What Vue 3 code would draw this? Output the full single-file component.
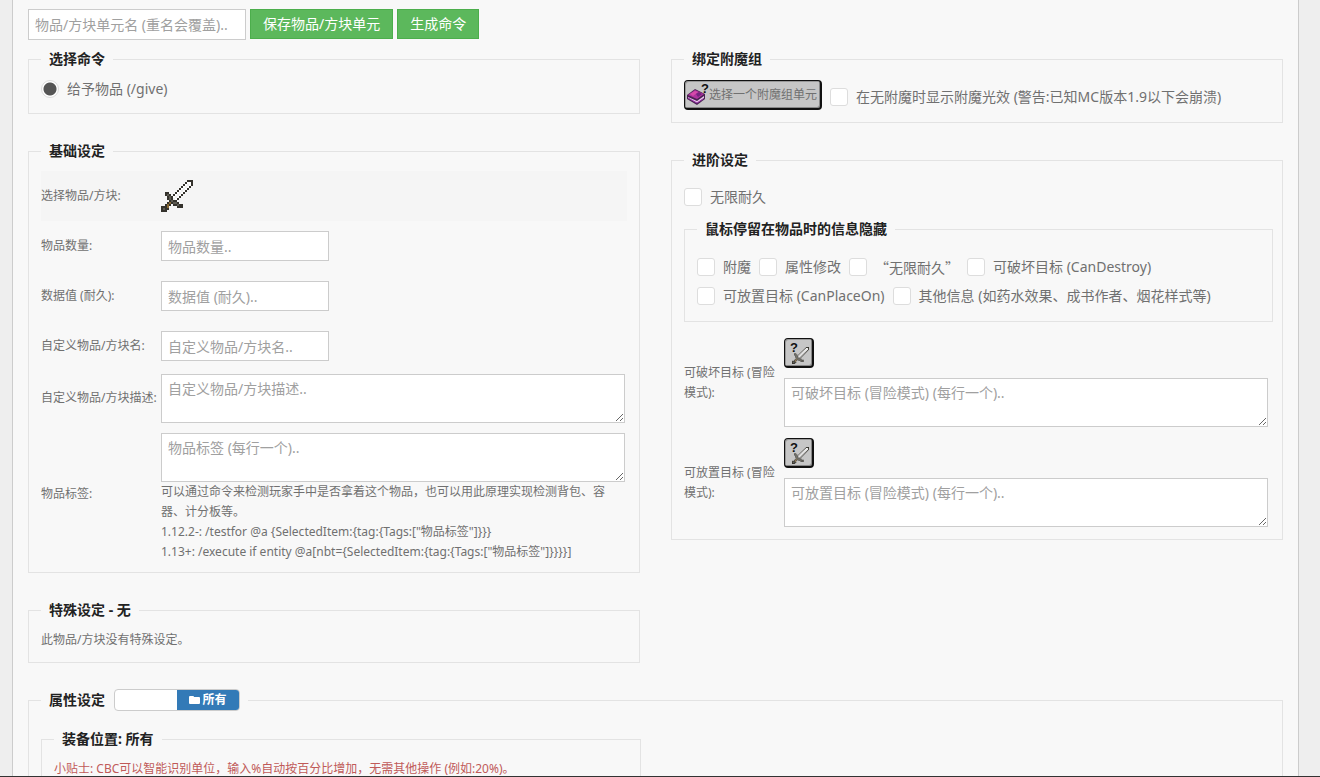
<script setup>
import { ref } from 'vue'

const swordMap = [
  '.............###',
  '............#ww#',
  '...........#wgw#',
  '..........#wgw#.',
  '.........#wgw#..',
  '........#wgw#...',
  '..##...#wgw#....',
  '..#s#.#wgw#.....',
  '...#s#wgw#......',
  '...#s#gw#.......',
  '....#s##........',
  '...#b#ss#.......',
  '..#b#.##s##.....',
  '###b....###.....',
  '#s##............',
  '###.............'
]
const palette = { '#': '#34322c', w: '#ffffff', g: '#ededed', s: '#5d5b52', b: '#8a6a35' }
const swordPixels = swordMap.flatMap((row, y) =>
  [...row].map((c, x) => ({ x, y, fill: palette[c] })).filter((p) => p.fill)
)

const unitName = ref('')
const command = ref('give')
const glint = ref(false)
const unbreakable = ref(false)
const hidden = ref([])

const inputs = [
  { id: 'count', label: '物品数量:', hint: '物品数量..' },
  { id: 'damage', label: '数据值 (耐久):', hint: '数据值 (耐久)..' },
  { id: 'name', label: '自定义物品/方块名:', hint: '自定义物品/方块名..' }
]
const flags = [
  { id: 'ench', text: '附魔' },
  { id: 'attr', text: '属性修改' },
  { id: 'unbr', text: '“无限耐久”', cjk: true },
  { id: 'destroy', text: '可破坏目标 (CanDestroy)' },
  { id: 'place', text: '可放置目标 (CanPlaceOn)' },
  { id: 'other', text: '其他信息 (如药水效果、成书作者、烟花样式等)' }
]
const targets = [
  { id: 'can-destroy', label: '可破坏目标 (冒险模式):', hint: '可破坏目标 (冒险模式) (每行一个)..' },
  { id: 'can-place', label: '可放置目标 (冒险模式):', hint: '可放置目标 (冒险模式) (每行一个)..' }
]
</script>

<template>
  <div class="page">
    <main class="panel">
      <form class="toolbar" @submit.prevent>
        <input v-model="unitName" class="field unit" type="text" aria-label="物品/方块单元名" placeholder="物品/方块单元名 (重名会覆盖).." />
        <button type="button" class="btn save">保存物品/方块单元</button>
        <button type="button" class="btn">生成命令</button>
      </form>

      <div class="columns">
        <div class="column">
          <fieldset class="command">
            <legend>选择命令</legend>
            <label class="check"><input v-model="command" type="radio" name="command" value="give" /><span>给予物品 (/give)</span></label>
          </fieldset>

          <fieldset class="basic">
            <legend>基础设定</legend>
            <div class="row striped">
              <span class="label">选择物品/方块:</span>
              <button type="button" class="item" aria-label="选择物品/方块">
                <svg width="32" height="32" viewBox="0 0 16 16" shape-rendering="crispEdges">
                  <rect v-for="(p, i) in swordPixels" :key="i" :x="p.x" :y="p.y" width="1" height="1" :fill="p.fill" />
                </svg>
              </button>
            </div>
            <div v-for="f in inputs" :key="f.id" class="row">
              <label class="label" :for="f.id">{{ f.label }}</label>
              <input :id="f.id" class="field short" type="text" :placeholder="f.hint" />
            </div>
            <div class="row tall">
              <label class="label" for="lore">自定义物品/方块描述:</label>
              <textarea id="lore" class="field area" placeholder="自定义物品/方块描述.."></textarea>
            </div>
            <div class="row tags">
              <label class="label" for="tags">物品标签:</label>
              <div class="grow">
                <textarea id="tags" class="field area" placeholder="物品标签 (每行一个).."></textarea>
                <p class="help">
                  可以通过命令来检测玩家手中是否拿着这个物品，也可以用此原理实现检测背包、容器、计分板等。<br />
                  1.12.2-: /testfor @a {SelectedItem:{tag:{Tags:["物品标签"]}}}<br />
                  1.13+: /execute if entity @a[nbt={SelectedItem:{tag:{Tags:["物品标签"]}}}}]
                </p>
              </div>
            </div>
          </fieldset>

          <fieldset>
            <legend>特殊设定 - 无</legend>
            <p class="note">此物品/方块没有特殊设定。</p>
          </fieldset>
        </div>

        <div class="column">
          <fieldset class="enchant">
            <legend>绑定附魔组</legend>
            <div class="bind">
              <button type="button" class="stone wide">
                <svg class="book" width="24" height="27" viewBox="0 0 24 27">
                  <path d="M2 14 10 8 20 13v5l-8 6-10-6z" fill="#4a2253" />
                  <path d="m3 14 7-5 9 4-7 5z" fill="#b0339f" />
                  <path d="m5 13 5-3 3 1-5 4z" fill="#d64aa9" />
                  <path d="m11 13 3-2 3 2-4 3z" fill="#74247f" />
                  <path d="m3 16 9 4 7-5v2l-7 5-9-5z" fill="#e8c5e9" />
                  <path d="m3 17 9 5 6-4" fill="none" stroke="#9b35aa" />
                  <text x="16" y="12" class="mark">?</text>
                </svg>
                <span>选择一个附魔组单元</span>
              </button>
              <label class="check"><input v-model="glint" type="checkbox" /><span>在无附魔时显示附魔光效 (警告:已知MC版本1.9以下会崩溃)</span></label>
            </div>
          </fieldset>

          <fieldset>
            <legend>进阶设定</legend>
            <label class="check first"><input v-model="unbreakable" type="checkbox" /><span>无限耐久</span></label>
            <fieldset class="flags">
              <legend>鼠标停留在物品时的信息隐藏</legend>
              <div class="flag-list">
                <label v-for="f in flags" :key="f.id" class="check"><input v-model="hidden" type="checkbox" :value="f.id" /><span :class="{ cjk: f.cjk }">{{ f.text }}</span></label>
              </div>
            </fieldset>
            <div v-for="t in targets" :key="t.id" class="target">
              <label class="label" :for="t.id">{{ t.label }}</label>
              <div class="grow">
                <button type="button" class="stone" aria-label="选择方块">
                  <svg width="27" height="27" viewBox="0 0 27 27">
                    <text x="5" y="13" class="mark">?</text>
                    <svg x="7" y="8" width="17" height="17" viewBox="0 0 16 16">
                      <rect v-for="(p, i) in swordPixels" :key="i" :x="p.x" :y="p.y" width="1" height="1" :fill="p.fill" />
                    </svg>
                  </svg>
                </button>
                <textarea :id="t.id" class="field area" :placeholder="t.hint"></textarea>
              </div>
            </div>
          </fieldset>
        </div>
      </div>

      <fieldset class="attributes">
        <legend>
          属性设定
          <button type="button" class="toggle">
            <span class="toggle-on">
              <svg width="11" height="10" viewBox="0 0 11 10"><path d="M0 2q0-1 1-1h3q1 0 1 1h5q1 0 1 1v5q0 1-1 1H1q-1 0-1-1z" fill="#fff" /></svg>所有</span>
          </button>
        </legend>
        <fieldset class="slot">
          <legend>装备位置: 所有</legend>
          <p class="note tip">小贴士: CBC可以智能识别单位，输入%自动按百分比增加，无需其他操作 (例如:20%)。</p>
        </fieldset>
      </fieldset>
    </main>
  </div>
</template>

<style>
body {
  background: #eee;
}
</style>

<style scoped>
.page,
.page * {
  box-sizing: border-box;
}
.page {
  height: 100vh;
  padding: 0 21px 0 12px;
  overflow: hidden;
  border-bottom: 1px solid #333;
  background: #eee;
  color: #707070;
  font: 14px/20px "Noto Sans", "Noto Sans CJK SC", sans-serif;
}
.panel {
  min-height: 100%;
  padding: 9px 15px;
  border: solid #ccc;
  border-width: 0 1px;
  background: #f8f8f8;
}
button,
input,
textarea {
  margin: 0;
  font: inherit;
  color: inherit;
}
.toolbar {
  display: flex;
  gap: 4px;
}
.field {
  display: block;
  height: 30px;
  padding: 4px 6px;
  border: 1px solid #ccc;
  border-radius: 0;
  background: #fff;
  outline: none;
}
.field::placeholder {
  color: #a0a0a0;
  opacity: 1;
}
.unit {
  width: 218px;
  height: 31px;
}
.btn {
  height: 30px;
  padding: 0 12px;
  border: 1px solid #4cae4c;
  background: #5cb85c;
  color: #fff;
  white-space: nowrap;
}
.columns {
  display: grid;
  grid-template-columns: 1fr 1fr;
  gap: 31px;
  align-items: start;
  margin-top: 9px;
}
.column {
  display: flex;
  flex-direction: column;
  gap: 27px;
  min-width: 0;
}
fieldset {
  min-width: 0;
  margin: 0;
  padding: 10px 12px 12px;
  border: 1px solid #e3e3e3;
}
.command {
  padding-bottom: 14px;
}
.basic {
  padding-bottom: 10px;
}
.enchant {
  padding-top: 11px;
}
legend {
  padding: 0 8px;
  color: #222;
  font-weight: 700;
}
.check {
  display: flex;
  align-items: center;
  gap: 8px;
  min-height: 20px;
}
.check input {
  appearance: none;
  flex: none;
  width: 18px;
  height: 18px;
  border: 1px solid #ddd;
  border-radius: 3px;
  background: #fff;
}
.check input[type="radio"] {
  border-radius: 50%;
}
.check input[type="radio"]:checked {
  background: radial-gradient(circle, #555 6px, #fff 7px);
}
.check input[type="checkbox"]:checked {
  background: #555;
}
.cjk {
  font-family: "Noto Sans CJK SC", sans-serif;
}
.row {
  display: grid;
  grid-template-columns: 120px 1fr;
  align-items: center;
  min-height: 50px;
}
.striped {
  background: #f5f5f5;
}
.tall {
  min-height: 54px;
}
.tags {
  padding-top: 8px;
}
.label {
  font-size: 12px;
  white-space: nowrap;
}
.tags .label {
  padding-bottom: 8px;
}
.item {
  width: 32px;
  height: 32px;
  padding: 0;
  border: 0;
  background: none;
}
.item svg,
.stone svg {
  display: block;
}
.short {
  width: 168px;
}
.area {
  width: calc(100% - 4px);
  height: 49px;
  resize: vertical;
}
.row .area {
  width: calc(100% - 2px);
}
.help,
.note {
  margin: 0;
  font-size: 12px;
}
.bind {
  display: flex;
  align-items: center;
  gap: 8px;
}
.bind .check {
  padding-top: 4px;
}
.stone {
  display: block;
  width: 30px;
  height: 30px;
  padding: 0;
  overflow: hidden;
  border: solid #111;
  border-width: 1px 2px 2px 1px;
  border-radius: 4px;
  background: #c6c6c6;
  box-shadow: inset 1px 1px #999, inset -1px -1px #888;
}
.wide {
  display: flex;
  align-items: center;
  flex: none;
  width: 138px;
  font-size: 12px;
  white-space: nowrap;
}
.book {
  flex: none;
}
.mark {
  fill: #111;
  font: 700 13px "Liberation Sans", sans-serif;
}
.first {
  margin-top: 7px;
}
.flags {
  margin: 12px -3px 16px 0;
  padding-top: 18px;
  padding-bottom: 15px;
}
.flag-list {
  display: flex;
  flex-wrap: wrap;
  gap: 9px 8px;
}
.target {
  display: grid;
  grid-template-columns: 100px 1fr;
  align-items: center;
}
.target + .target {
  margin-top: 11px;
}
.target .label {
  white-space: normal;
}
.target .area {
  width: calc(100% - 2px);
  margin-top: 10px;
}
.attributes {
  margin-top: 26px;
  min-height: 120px;
}
.attributes > legend {
  display: flex;
  align-items: center;
  gap: 9px;
}
.toggle {
  display: flex;
  justify-content: flex-end;
  width: 126px;
  height: 22px;
  padding: 0;
  overflow: hidden;
  border: 1px solid #ccc;
  border-radius: 4px;
  background: #fff;
}
.toggle-on {
  display: flex;
  align-items: center;
  justify-content: center;
  gap: 2px;
  width: 62px;
  height: 20px;
  background: #337ab7;
  color: #fff;
  font-size: 12px;
}
.slot {
  width: 600px;
  max-width: 100%;
  min-height: 120px;
  margin-top: 8px;
}
.tip {
  color: #c05a58;
  white-space: nowrap;
}
</style>
